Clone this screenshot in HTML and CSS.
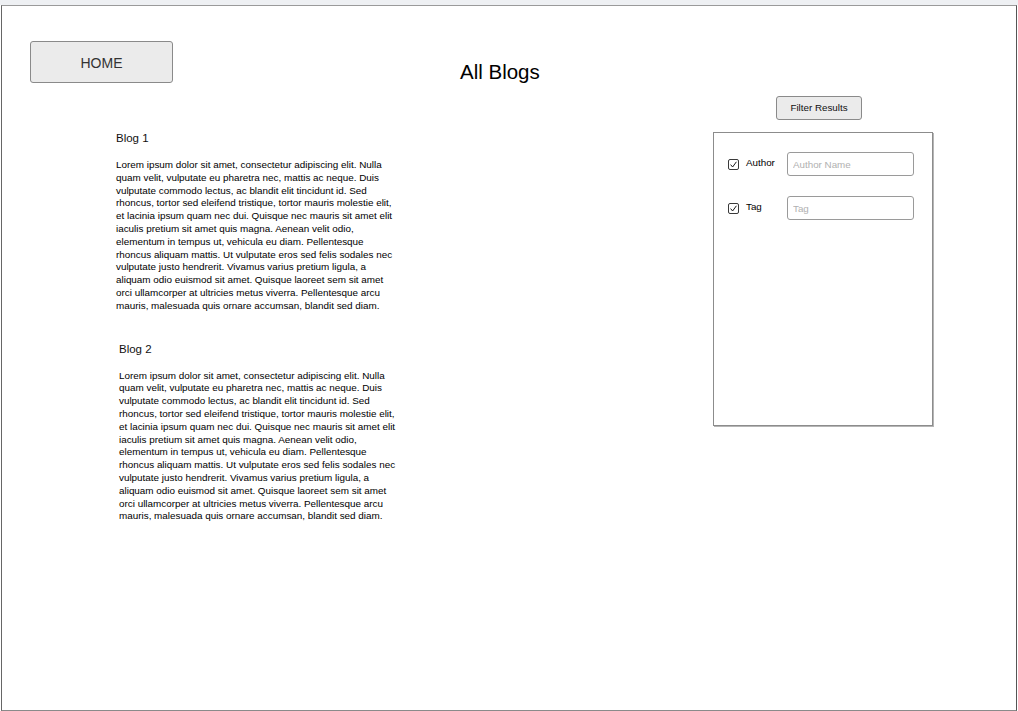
FILE: index.html
```html
<!DOCTYPE html>
<html lang="en">
<head>
<meta charset="utf-8">
<title>All Blogs</title>
<link rel="stylesheet" href="styles.css">
</head>
<body>
<div class="topbar"></div>
<div class="frame">
  <header class="header">
    <button class="home-btn" type="button">HOME</button>
    <h1 class="page-title">All Blogs</h1>
  </header>
  <main class="main">
    <section class="blogs">
      <article class="blog">
        <h2 class="blog-title">Blog 1</h2>
        <p class="blog-text">Lorem ipsum dolor sit amet, consectetur adipiscing elit. Nulla quam velit, vulputate eu pharetra nec, mattis ac neque. Duis vulputate commodo lectus, ac blandit elit tincidunt id. Sed rhoncus, tortor sed eleifend tristique, tortor mauris molestie elit, et lacinia ipsum quam nec dui. Quisque nec mauris sit amet elit iaculis pretium sit amet quis magna. Aenean velit odio, elementum in tempus ut, vehicula eu diam. Pellentesque rhoncus aliquam mattis. Ut vulputate eros sed felis sodales nec vulputate justo hendrerit. Vivamus varius pretium ligula, a aliquam odio euismod sit amet. Quisque laoreet sem sit amet orci ullamcorper at ultricies metus viverra. Pellentesque arcu mauris, malesuada quis ornare accumsan, blandit sed diam.</p>
      </article>
      <article class="blog blog--shifted">
        <h2 class="blog-title">Blog 2</h2>
        <p class="blog-text">Lorem ipsum dolor sit amet, consectetur adipiscing elit. Nulla quam velit, vulputate eu pharetra nec, mattis ac neque. Duis vulputate commodo lectus, ac blandit elit tincidunt id. Sed rhoncus, tortor sed eleifend tristique, tortor mauris molestie elit, et lacinia ipsum quam nec dui. Quisque nec mauris sit amet elit iaculis pretium sit amet quis magna. Aenean velit odio, elementum in tempus ut, vehicula eu diam. Pellentesque rhoncus aliquam mattis. Ut vulputate eros sed felis sodales nec vulputate justo hendrerit. Vivamus varius pretium ligula, a aliquam odio euismod sit amet. Quisque laoreet sem sit amet orci ullamcorper at ultricies metus viverra. Pellentesque arcu mauris, malesuada quis ornare accumsan, blandit sed diam.</p>
      </article>
    </section>
    <aside class="filters">
      <button class="filter-btn" type="button">Filter Results</button>
      <div class="filter-panel">
        <div class="filter-row">
          <svg class="check" viewBox="0 0 11 11" aria-hidden="true"><rect x="0.5" y="0.5" width="10" height="10" rx="1.5" fill="#fff" stroke="#3a3a3a"/><path d="M2.6 5.6 L4.6 8 L8.4 2.8" fill="none" stroke="#1a1a1a" stroke-width="1"/></svg>
          <span class="filter-label">Author</span>
          <input class="filter-input" type="text" placeholder="Author Name">
        </div>
        <div class="filter-row">
          <svg class="check" viewBox="0 0 11 11" aria-hidden="true"><rect x="0.5" y="0.5" width="10" height="10" rx="1.5" fill="#fff" stroke="#3a3a3a"/><path d="M2.6 5.6 L4.6 8 L8.4 2.8" fill="none" stroke="#1a1a1a" stroke-width="1"/></svg>
          <span class="filter-label">Tag</span>
          <input class="filter-input" type="text" placeholder="Tag">
        </div>
      </div>
    </aside>
  </main>
</div>
</body>
</html>
```
FILE: styles.css
```css
* { box-sizing: border-box; }

body {
  margin: 0;
  background: #fff;
  font-family: "Liberation Sans", Arial, sans-serif;
  color: #000;
}

.topbar {
  height: 5px;
  background: #eef0f3;
}

.frame {
  margin-left: 1px;
  width: 1016px;
  height: 706px;
  border: 1px solid;
  border-color: #9a9a9a #555 #8a8a8a #666;
  padding: 35px 0 0 28px;
}

.header {
  display: flex;
  align-items: flex-start;
}

.home-btn {
  width: 143px;
  height: 42px;
  padding: 2px 0 0;
  background: #ebebeb;
  border: 1px solid #8a8a8a;
  border-radius: 3px;
  font-family: "Liberation Sans", Arial, sans-serif;
  font-size: 14px;
  color: #333;
}

.page-title {
  margin: 19px 0 0 287px;
  font-size: 20.5px;
  font-weight: normal;
  line-height: 23px;
  color: #000;
}

.main {
  display: flex;
  align-items: flex-start;
  margin-top: 13px;
}

.blogs {
  margin-left: 86px;
  padding-top: 35px;
  width: 284px;
  flex: none;
}

.blog {
  width: 281px;
}

.blog + .blog {
  margin-top: 29px;
}

.blog--shifted {
  margin-left: 3px;
}

.blog-title {
  margin: 0;
  font-size: 11.5px;
  font-weight: normal;
  line-height: 14px;
  color: #111;
}

.blog-text {
  margin: 14px 0 0;
  font-size: 9.9px;
  line-height: 12.8px;
  color: #000;
}

.filters {
  margin-left: 313px;
  display: flex;
  flex-direction: column;
  align-items: flex-start;
}

.filter-btn {
  margin-left: 63px;
  width: 86px;
  height: 24px;
  padding: 0 0 1px;
  background: #ebebeb;
  border: 1px solid #8a8a8a;
  border-radius: 3px;
  font-family: "Liberation Sans", Arial, sans-serif;
  font-size: 9.8px;
  color: #111;
}

.filter-panel {
  margin-top: 12px;
  width: 220px;
  height: 294px;
  border: 1px solid #8c8c8c;
  box-shadow: 1px 1px 0 #b5b5b5;
  padding: 19px 0 0 14px;
  display: flex;
  flex-direction: column;
  gap: 20px;
}

.filter-row {
  display: flex;
  align-items: center;
  height: 24px;
}

.check {
  width: 11px;
  height: 11px;
  flex: none;
}

.filter-label {
  margin: 0 0 3px 7px;
  width: 41px;
  flex: none;
  font-size: 9.8px;
  color: #000;
}

.filter-input {
  width: 127px;
  height: 24px;
  padding: 0 5px;
  border: 1px solid #9a9a9a;
  border-radius: 3px;
  background: #fff;
  font-family: "Liberation Sans", Arial, sans-serif;
  font-size: 9.8px;
  color: #000;
  outline: none;
}

.filter-input::placeholder {
  color: #b0b0b0;
}
```
